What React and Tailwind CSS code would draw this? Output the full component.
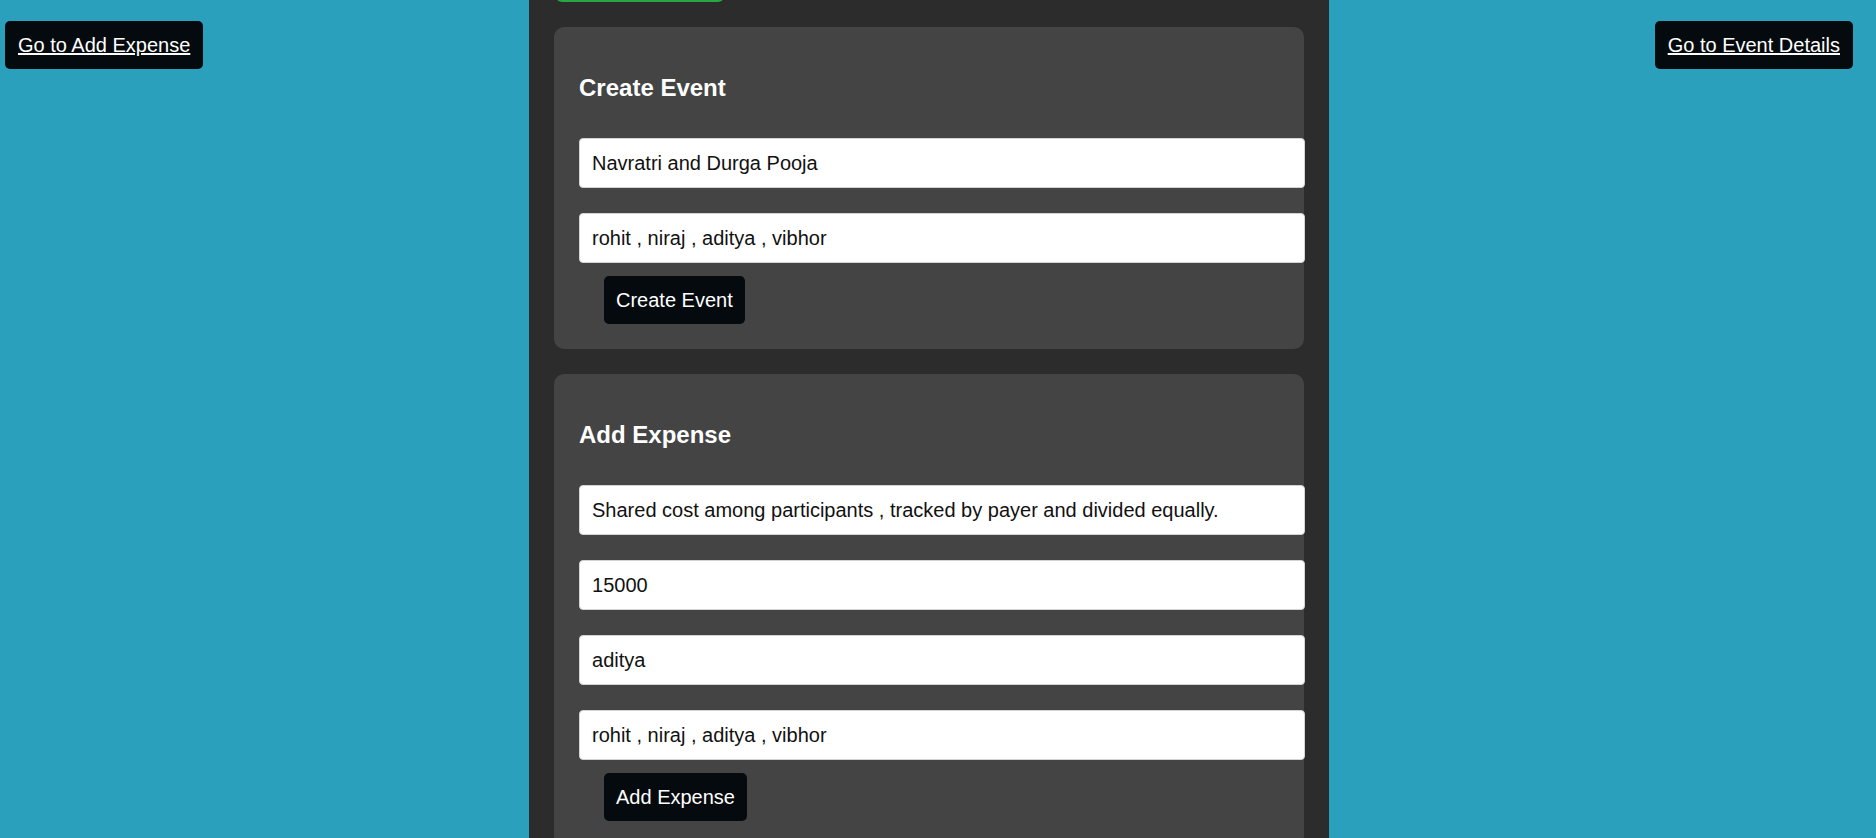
import React from 'react';

const font = { fontFamily: '"Liberation Sans", Arial, sans-serif' };

function Field({ value }) {
  return (
    <input
      readOnly
      value={value}
      className="block w-[calc(100%+26px)] h-[50px] px-3 bg-white border border-[#d4d4d4] rounded-[4px] text-[20px] text-[#111] outline-none"
    />
  );
}

function Card({ title, fields, action }) {
  return (
    <div className="bg-[#444444] rounded-[10px] px-[25px] pt-[25px] pb-[25px]">
      <h2 className="mt-[22px] mb-[36px] text-[24px] leading-[28px] font-bold text-white">{title}</h2>
      <div className="flex flex-col gap-[25px]">
        {fields.map((f, i) => (
          <Field key={i} value={f} />
        ))}
      </div>
      <button className="mt-[13px] ml-[25px] h-[48px] px-3 bg-[#050a0e] text-white text-[20px] rounded-[5px]">
        {action}
      </button>
    </div>
  );
}

export default function App() {
  return (
    <div style={font} className="h-[838px] overflow-hidden bg-[#2aa0bc] flex items-start justify-between pl-[5px] pr-[23px]">
      {/* left nav */}
      <a href="#" className="mt-[21px] h-[48px] px-[13px] flex items-center bg-[#050a0e] text-white text-[20px] underline rounded-[5px]">
        Go to Add Expense
      </a>

      {/* main column, scrolled a little */}
      <div className="w-[800px] min-h-[900px] bg-[#2c2c2c] px-[25px]">
        <div className="-mt-[46px] ml-[2px] h-[48px] w-[168px] bg-[#28a745] rounded-[6px]" />
        <div className="mt-[25px] flex flex-col gap-[25px]">
          <Card
            title="Create Event"
            fields={['Navratri and Durga Pooja', 'rohit , niraj , aditya , vibhor']}
            action="Create Event"
          />
          <Card
            title="Add Expense"
            fields={[
              'Shared cost among participants , tracked by payer and divided equally.',
              '15000',
              'aditya',
              'rohit , niraj , aditya , vibhor',
            ]}
            action="Add Expense"
          />
        </div>
      </div>

      {/* right nav */}
      <a href="#" className="mt-[21px] h-[48px] px-[13px] flex items-center bg-[#050a0e] text-white text-[20px] underline rounded-[5px]">
        Go to Event Details
      </a>
    </div>
  );
}
